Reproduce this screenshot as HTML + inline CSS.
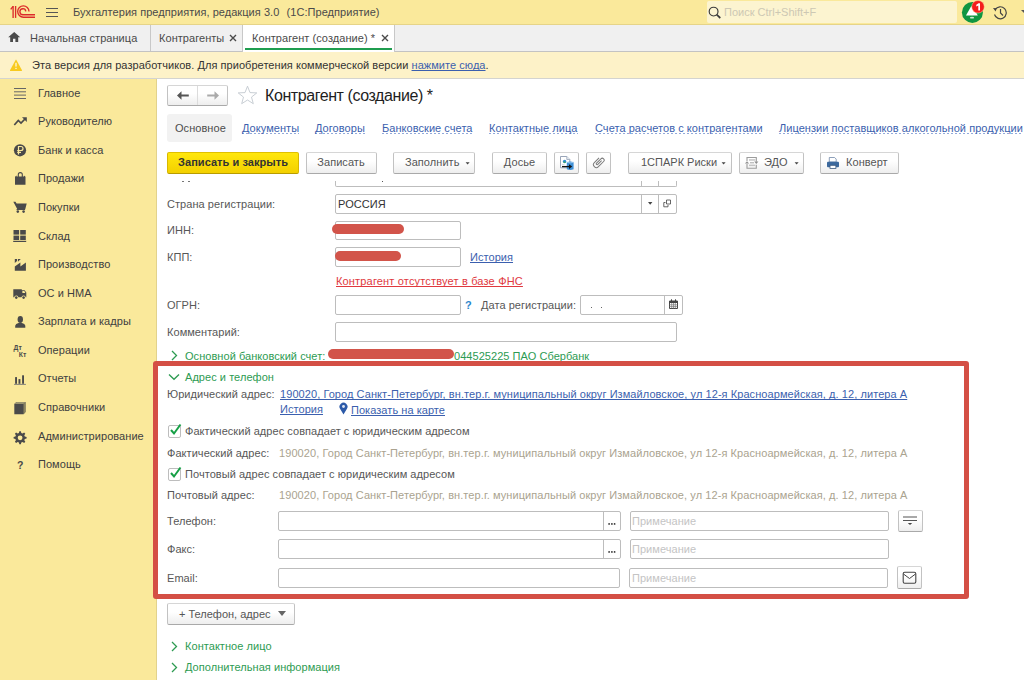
<!DOCTYPE html>
<html><head><meta charset="utf-8">
<style>
*{box-sizing:border-box}
html,body{margin:0;padding:0}
body{width:1024px;height:680px;overflow:hidden;position:relative;background:#fff;font-family:"Liberation Sans",sans-serif;font-size:11px;line-height:13px;color:#575757;letter-spacing:0.05px}
.a{position:absolute;white-space:nowrap}
.t{position:absolute;white-space:nowrap;line-height:13px}
.lnk{color:#3b5fae;text-decoration:underline;text-decoration-skip-ink:none}
*{text-decoration-skip-ink:none}
.dl{color:#3b5fae;height:12px;background:repeating-linear-gradient(90deg,#92a9da 0 2px,transparent 2px 4px) left bottom/100% 1px no-repeat}
.fld{position:absolute;border:1px solid #bdbdbd;border-radius:2px;background:#fff}
.btn{position:absolute;border:1px solid #c2c2c2;border-color:#d6d6d6 #c2c2c2 #a9a9a9;border-radius:2px;background:linear-gradient(#ffffff 40%,#eeeeee)}
.grn{color:#2d9b52}
.si{position:absolute;left:14px;width:13px;height:13px}
</style></head><body>

<!-- HEADER -->
<div class="a" style="left:0;top:0;width:1024px;height:24px;background:#fae99b"></div>
<div class="a" style="left:0;top:24px;width:1024px;height:1px;background:#e6d488"></div>
<svg class="a" style="left:10px;top:5px" width="26" height="14" viewBox="0 0 26 14">
 <g fill="none" stroke="#dc2a2a" stroke-width="1.35">
  <path d="M0.7 4.3 L3.1 1.3"/><path d="M3.1 1 V12.9"/><path d="M5.6 1 V12.9"/>
  <path d="M25 12.2 H13.35 A5.65 5.65 0 0 1 13.35 0.9 A5.65 5.65 0 0 1 19 6.4"/>
  <path d="M25 9.7 H12.9 A3 3 0 0 1 12.9 3.7 A3 3 0 0 1 15.8 6.4"/>
 </g>
</svg>
<div class="a" style="left:46px;top:8px;width:12px;height:1px;background:#555"></div>
<div class="a" style="left:46px;top:12px;width:12px;height:1px;background:#555"></div>
<div class="a" style="left:46px;top:16px;width:12px;height:1px;background:#555"></div>
<div class="t" style="left:73px;top:6px;color:#4a4a4a">Бухгалтерия предприятия, редакция 3.0&nbsp; <span style="margin-left:1px">(1С:Предприятие)</span></div>
<div class="a" style="left:707px;top:1px;width:250px;height:22px;background:#fcf4d0;border-radius:2px"></div>
<svg class="a" style="left:708px;top:6px" width="14" height="13" viewBox="0 0 14 13"><circle cx="5.6" cy="5.6" r="4.4" fill="none" stroke="#3a3a3a" stroke-width="1.15"/><path d="M8.7 8.7 L12.3 12" stroke="#3a3a3a" stroke-width="1.7"/></svg>
<div class="t" style="left:724px;top:6px;color:#cdc8b4;letter-spacing:0px">Поиск Ctrl+Shift+F</div>
<svg class="a" style="left:961px;top:0" width="26" height="24" viewBox="0 0 26 24">
 <circle cx="11.4" cy="12.4" r="10.5" fill="#0f9641"/>
 <path d="M9.9 6.8 Q10.9 5.6 11.9 6.8 L16.8 15.6 H5 Z" fill="#fff"/>
 <ellipse cx="11" cy="17.7" rx="2.1" ry="0.9" fill="#cfe9d2"/>
 <circle cx="17" cy="6.8" r="6.3" fill="#f41d1d" stroke="#f7d9a0" stroke-width="0.5"/>
 <path d="M15.3 4.7 L17.5 3.2 H19 V10.6 H17.3 V5.4 L15.3 6.4 Z" fill="#fff"/>
</svg>
<svg class="a" style="left:992px;top:5px" width="16" height="15" viewBox="0 0 16 15">
 <path d="M3.2 4.5 A6 6 0 1 1 2.5 9.5" fill="none" stroke="#444" stroke-width="1.2"/>
 <path d="M1 3 L4.8 3.2 L3.6 6.4 Z" fill="#444"/>
 <path d="M8.5 4 V8 L11 10.5" fill="none" stroke="#444" stroke-width="1.2"/>
</svg>
<svg class="a" style="left:1021px;top:10px" width="5" height="4"><path d="M0 0 H6 L3 3Z" fill="#555"/></svg>

<!-- TABS BAR -->
<div class="a" style="left:0;top:25px;width:1024px;height:27px;background:#f0f0f0;border-bottom:1px solid #c3c3c3"></div>
<svg class="a" style="left:8px;top:31px" width="13" height="12" viewBox="0 0 13 12"><path d="M6.2 0.9 L0.2 6.2 H2.2 V10.9 H5 V7.8 H7.4 V10.9 H10.2 V6.2 H12.2 Z" fill="#4a4a4a"/></svg>
<div class="t" style="left:30px;top:32px;color:#4a4a4a">Начальная страница</div>
<div class="a" style="left:150px;top:25px;width:1px;height:26px;background:#c8c8c8"></div>
<div class="t" style="left:159px;top:32px;color:#4a4a4a">Контрагенты</div>
<svg class="a" style="left:229px;top:34px" width="8" height="8" viewBox="0 0 8 8"><path d="M1 1 L7 7 M7 1 L1 7" stroke="#4a4a4a" stroke-width="1.4"/></svg>
<div class="a" style="left:242px;top:25px;width:153px;height:27px;background:#fff;border-left:1px solid #c8c8c8;border-right:1px solid #c8c8c8"></div>
<div class="a" style="left:245px;top:48px;width:147px;height:2px;background:#1f9d4f"></div>
<div class="t" style="left:252px;top:32px;color:#4a4a4a">Контрагент (создание) *</div>
<svg class="a" style="left:381px;top:34px" width="8" height="8" viewBox="0 0 8 8"><path d="M1 1 L7 7 M7 1 L1 7" stroke="#4a4a4a" stroke-width="1.4"/></svg>

<!-- WARNING BAR -->
<div class="a" style="left:0;top:52px;width:1024px;height:27px;background:#fdf2c8;border-bottom:1px solid #d4d4d0"></div>
<svg class="a" style="left:10px;top:59px" width="13" height="13" viewBox="0 0 13 13"><path d="M5.6 0.9 Q6 0.2 6.4 0.9 L12 11.3 Q12.2 12 11.5 12 H0.5 Q-0.2 12 0 11.3 Z" fill="#f8ca1e"/><rect x="5.2" y="3.8" width="1.6" height="3.8" fill="#fdeeb8"/><rect x="5.2" y="8.8" width="1.6" height="1.2" fill="#fdeeb8"/></svg>
<div class="t" style="left:32px;top:59px;color:#333">Эта версия для разработчиков. Для приобретения коммерческой версии <span class="lnk" style="color:#3b5fae">нажмите сюда</span>.</div>

<!-- SIDEBAR -->
<div class="a" style="left:0;top:79px;width:157px;height:601px;background:#fae99b;border-right:1px solid #e2d28c"></div>
<div class="t" style="left:38px;top:87px;color:#404040">Главное</div>
<div class="t" style="left:38px;top:115px;color:#404040">Руководителю</div>
<div class="t" style="left:38px;top:144px;color:#404040">Банк и касса</div>
<div class="t" style="left:38px;top:172px;color:#404040">Продажи</div>
<div class="t" style="left:38px;top:201px;color:#404040">Покупки</div>
<div class="t" style="left:38px;top:230px;color:#404040">Склад</div>
<div class="t" style="left:38px;top:258px;color:#404040">Производство</div>
<div class="t" style="left:38px;top:287px;color:#404040">ОС и НМА</div>
<div class="t" style="left:38px;top:315px;color:#404040">Зарплата и кадры</div>
<div class="t" style="left:38px;top:344px;color:#404040">Операции</div>
<div class="t" style="left:38px;top:372px;color:#404040">Отчеты</div>
<div class="t" style="left:38px;top:401px;color:#404040">Справочники</div>
<div class="t" style="left:38px;top:430px;color:#404040">Администрирование</div>
<div class="t" style="left:38px;top:458px;color:#404040">Помощь</div>
<svg class="a" style="left:0;top:0" width="40" height="480" viewBox="0 0 40 480">
 <g fill="#4a4a4a">
  <rect x="14" y="88" width="12" height="1" fill="#666"/>
  <rect x="14" y="91.3" width="12" height="1" fill="#666"/>
  <rect x="14" y="94.6" width="12" height="1" fill="#666"/>
  <rect x="14" y="98" width="12" height="1" fill="#666"/>
  <path d="M14.3 125 L18.3 120.5 L21 123 L25 119" fill="none" stroke="#4a4a4a" stroke-width="1.7"/>
  <path d="M22 117.3 H26.8 V122 Z" />
  <circle cx="20" cy="150.3" r="6.1"/>
  <path d="M18.5 154.5 V146.5 H21 A2 2 0 0 1 21 150.5 H17.2 M17.2 152.3 H21" fill="none" stroke="#fae99b" stroke-width="1.2"/>
  <path d="M15 176.8 L16.6 175.4 V176.4 H23.9 V175.4 L25.5 176.8 V184.8 H15 Z"/>
  <path d="M18.3 178 V174.6 A2 2 0 0 1 22.3 174.6 V178" fill="none" stroke="#4a4a4a" stroke-width="1.1"/>
  <path d="M13.3 201.8 H15.5 L16.6 203.5 H26.7 L25.3 209 H17.2 Z"/>
  <circle cx="17.8" cy="211.6" r="1.3"/><circle cx="23.6" cy="211.6" r="1.3"/>
  <rect x="16.6" y="209" width="8.5" height="1"/>
  <rect x="13.5" y="230" width="5.6" height="4.6"/><rect x="20.2" y="230" width="5.6" height="4.6"/>
  <rect x="13.5" y="235.6" width="5.6" height="4.4"/><rect x="20.2" y="235.6" width="5.6" height="4.4"/>
  <rect x="13.2" y="240.8" width="13" height="1.2"/>
  <path d="M14.8 270.8 V266.6 L20.4 262.6 V266.4 L25.9 262.4 V270.8 Z"/><path d="M14.8 259 H17 V261 L14.8 263 Z M17.9 259 H20.8 L17.9 261.8 Z"/>
  <path d="M13.3 289.2 H21.8 V290.2 H24.6 L26.3 292.6 V297.2 H13.3 Z"/>
  <path d="M22.4 291 H24.3 L25.4 293 H22.4 Z" fill="#fae99b"/>
  <circle cx="16.3" cy="297.6" r="2.1" fill="#fae99b"/><circle cx="16.3" cy="297.6" r="1.3"/>
  <circle cx="23.6" cy="297.6" r="2.1" fill="#fae99b"/><circle cx="23.6" cy="297.6" r="1.3"/>
  <ellipse cx="20.3" cy="319.5" rx="2.7" ry="3.4"/>
  <path d="M15.2 327.8 V325.8 Q15.5 323.5 18.5 323 H22 Q25 323.5 25.3 325.8 V327.8 Z"/>
  <text x="13.6" y="349.6" font-family="Liberation Sans" font-size="6.8" font-weight="bold" letter-spacing="0">Дт</text>
  <text x="18.8" y="357.2" font-family="Liberation Sans" font-size="6.8" font-weight="bold" letter-spacing="0">Кт</text>
  <rect x="15.1" y="377.1" width="1.9" height="6.7"/><rect x="18.5" y="379.1" width="1.9" height="4.7"/><rect x="22.1" y="375.3" width="1.9" height="8.5"/>
  <rect x="14.1" y="383.9" width="11.8" height="0.9" fill="#777"/>
  <path d="M14.3 404 L16.5 402 H25.5 V412 L23.5 414.3 H14.3 Z" fill="#4a4a4a"/>
  <path d="M23.5 404 L25.5 402 V412 L23.5 414.3 Z" fill="#8a8460"/>
  <path d="M14.3 404 L16.5 402 H25.5 L23.5 404 Z" fill="#9a9470"/>
  <path fill-rule="evenodd" d="M19.3 431.3 H20.9 L21.3 433.1 L22.6 433.6 L24.1 432.6 L25.3 433.8 L24.3 435.3 L24.8 436.6 L26.6 437 V438.6 L24.8 439 L24.3 440.3 L25.3 441.8 L24.1 443 L22.6 442 L21.3 442.5 L20.9 444.3 H19.3 L18.9 442.5 L17.6 442 L16.1 443 L14.9 441.8 L15.9 440.3 L15.4 439 L13.6 438.6 V437 L15.4 436.6 L15.9 435.3 L14.9 433.8 L16.1 432.6 L17.6 433.6 L18.9 433.1 Z M20.1 435.4 A2.4 2.4 0 1 0 20.1 440.2 A2.4 2.4 0 1 0 20.1 435.4 Z"/>
  <text x="17" y="469" font-family="Liberation Sans" font-size="10.5" font-weight="bold">?</text>
 </g>
</svg>

<!-- CONTENT placeholder -->
<!-- FORM HEADER -->
<div class="btn" style="left:167px;top:85px;width:61px;height:21px"></div>
<div class="a" style="left:197px;top:86px;width:1px;height:19px;background:#dcdcdc"></div>
<svg class="a" style="left:176px;top:90px" width="14" height="11" viewBox="0 0 14 11"><path d="M1 5.5 L5.5 1.2 V4.5 H12.8 V6.5 H5.5 V9.8 Z" fill="#555"/></svg>
<svg class="a" style="left:206px;top:90px" width="14" height="11" viewBox="0 0 14 11"><path d="M13 5.5 L8.5 1.2 V4.5 H1.2 V6.5 H8.5 V9.8 Z" fill="#aaa"/></svg>
<svg class="a" style="left:237px;top:85px" width="21" height="20" viewBox="0 0 21 20"><path d="M10.5 1.2 L13 7.6 L19.8 7.9 L14.5 12.1 L16.3 18.7 L10.5 15 L4.7 18.7 L6.5 12.1 L1.2 7.9 L8 7.6 Z" fill="none" stroke="#c2c8cf" stroke-width="0.9"/></svg>
<div class="t" style="left:265px;top:87px;font-size:16px;line-height:18px;letter-spacing:-0.42px;color:#1e1e1e">Контрагент (создание) *</div>

<div class="a" style="left:167px;top:114px;width:65px;height:28px;background:#f2f2f2;border-radius:3px"></div>
<div class="t" style="left:175px;top:122px;color:#4d4d4d">Основное</div>
<div class="t dl" style="left:242px;top:122px">Документы</div>
<div class="t dl" style="left:315px;top:122px">Договоры</div>
<div class="t dl" style="left:382px;top:122px">Банковские счета</div>
<div class="t dl" style="left:489px;top:122px">Контактные лица</div>
<div class="t dl" style="left:595px;top:122px">Счета расчетов с контрагентами</div>
<div class="t dl" style="left:779px;top:122px">Лицензии поставщиков алкогольной продукции</div>

<!-- TOOLBAR -->
<div class="btn" style="left:167px;top:152px;width:132px;height:22px;background:linear-gradient(#ffe70c,#f3d000);border-color:#e0c000 #d8b800 #b89c00"></div>
<div class="t" style="left:167px;top:156px;width:132px;text-align:center;font-weight:bold;color:#333">Записать и закрыть</div>
<div class="btn" style="left:306px;top:152px;width:71px;height:22px"></div>
<div class="t" style="left:306px;top:156px;width:70px;text-align:center;color:#555">Записать</div>
<div class="btn" style="left:393px;top:152px;width:82px;height:22px"></div>
<div class="t" style="left:405px;top:156px;color:#555">Заполнить</div>
<svg class="a" style="left:465px;top:162px" width="5" height="3"><path d="M0.6 0.2H4.6L2.6 2.4Z" fill="#444"/></svg>
<div class="btn" style="left:492px;top:152px;width:55px;height:22px"></div>
<div class="t" style="left:492px;top:156px;width:55px;text-align:center;color:#555">Досье</div>
<div class="btn" style="left:554px;top:152px;width:25px;height:22px"></div>
<svg class="a" style="left:558px;top:154px" width="18" height="18" viewBox="0 0 18 18">
 <path d="M2.5 2.5 H8.8 L11.8 5.5 V13.8 H2.5 Z" fill="#fff" stroke="#8d9bb0" stroke-width="0.9"/>
 <path d="M8.8 2.5 V5.5 H11.8" fill="#e8edf3" stroke="#8d9bb0" stroke-width="0.7"/>
 <circle cx="6.6" cy="7.5" r="1.7" fill="#2b8ad6"/><path d="M5.4 7.8 Q6.5 6.8 7.8 8.2 Q6.8 9.4 5.6 8.5Z" fill="#3fae49"/>
 <path d="M3.8 10.6 H6.5" stroke="#c9cfd8" stroke-width="0.8"/>
 <path d="M8.8 8.2 Q12.2 6.8 15.6 8.2 V15.2 Q12.2 16.6 8.8 15.2 Z" fill="#3e8fd6"/>
 <path d="M8.8 8.2 Q12.2 9.6 15.6 8.2" fill="none" stroke="#a9d2f2" stroke-width="0.8"/>
 <path d="M4 12.6 H12" stroke="#111" stroke-width="1.3"/>
 <path d="M11 10.3 L14.2 12.6 L11 14.9 Z" fill="#111"/>
</svg>
<div class="btn" style="left:586px;top:152px;width:25px;height:22px"></div>
<svg class="a" style="left:592px;top:155px" width="14" height="14" viewBox="-7 -7 14 14">
 <g transform="rotate(225)"><path d="M-0.9 2.8 V-2.6 A0.9 0.9 0 0 1 0.9 -2.6 V3.6 A1.9 1.9 0 0 1 -2.9 3.6 V-3.7 A2.9 2.9 0 0 1 2.9 -3.7 V3" fill="none" stroke="#7a7a7a" stroke-width="1"/></g>
</svg>
<div class="btn" style="left:628px;top:152px;width:104px;height:22px"></div>
<div class="t" style="left:641px;top:156px;color:#555;letter-spacing:0">1СПАРК Риски</div>
<svg class="a" style="left:721px;top:162px" width="5" height="3"><path d="M0.6 0.2H4.6L2.6 2.4Z" fill="#444"/></svg>
<div class="btn" style="left:739px;top:152px;width:65px;height:22px"></div>
<svg class="a" style="left:744px;top:155px" width="16" height="16" viewBox="0 0 16 16">
 <path d="M3 6 V2.5 H12.3 V6.8" fill="none" stroke="#9c9c9c" stroke-width="1.1"/>
 <path d="M10.2 6.6 H14.4 L12.3 9 Z" fill="#8f8f8f"/>
 <path d="M12.3 9.8 V13.3 H3 V9" fill="none" stroke="#9c9c9c" stroke-width="1.1"/>
 <path d="M0.9 8.6 H5.1 L3 6.2 Z" fill="#8f8f8f"/>
 <rect x="5" y="4.2" width="6.3" height="1.5" fill="#c4c4c4"/>
 <rect x="6" y="7.3" width="4" height="1" fill="#a5a5a5"/>
 <rect x="5" y="9.6" width="6.3" height="1.5" fill="#c4c4c4"/>
</svg>
<div class="t" style="left:764px;top:156px;color:#555">ЭДО</div>
<svg class="a" style="left:794px;top:162px" width="5" height="3"><path d="M0.6 0.2H4.6L2.6 2.4Z" fill="#444"/></svg>
<div class="btn" style="left:820px;top:152px;width:79px;height:22px"></div>
<svg class="a" style="left:826px;top:156px" width="14" height="14" viewBox="0 0 14 14">
 <path d="M3.3 1.5 H8.6 L10.2 3.1 V6 H3.3 Z" fill="#fff" stroke="#7088a8" stroke-width="0.8"/>
 <rect x="1" y="5.7" width="12" height="5.5" rx="1" fill="#3d6a9e"/>
 <rect x="4" y="9.3" width="5.9" height="3.1" fill="#fff" stroke="#3d5a80" stroke-width="0.8"/>
</svg>
<div class="t" style="left:846px;top:156px;color:#555">Конверт</div>

<!-- FORM BODY -->
<div class="a" style="left:335px;top:181px;width:342px;height:6px;border:1px solid #bdbdbd;border-top:none;border-radius:0 0 2px 2px"></div>
<div class="a" style="left:641px;top:181px;width:1px;height:5px;background:#bdbdbd"></div>
<div class="a" style="left:658px;top:181px;width:1px;height:5px;background:#bdbdbd"></div>
<div class="a" style="left:382px;top:181px;width:1px;height:1px;background:#555"></div>
<div class="a" style="left:182px;top:181px;width:2px;height:1px;background:#777"></div>
<div class="a" style="left:188px;top:181px;width:2px;height:1px;background:#777"></div>

<div class="t" style="left:167px;top:198px">Страна регистрации:</div>
<div class="fld" style="left:335px;top:194px;width:342px;height:20px"></div>
<div class="a" style="left:641px;top:195px;width:1px;height:18px;background:#bdbdbd"></div>
<div class="a" style="left:658px;top:195px;width:1px;height:18px;background:#bdbdbd"></div>
<svg class="a" style="left:648px;top:202px" width="5" height="3"><path d="M0 0H4.4L2.2 2.8Z" fill="#444"/></svg>
<svg class="a" style="left:663px;top:199px" width="9" height="9" viewBox="0 0 9 9"><path d="M3.5 1 H7.5 V5 H3.5Z M2.5 3.5 H0.8 V7.8 H5 V6" fill="none" stroke="#555" stroke-width="0.9"/></svg>
<div class="t" style="left:338px;top:198px;color:#333">РОССИЯ</div>

<div class="t" style="left:167px;top:224px">ИНН:</div>
<div class="fld" style="left:335px;top:221px;width:126px;height:19px"></div>
<div class="a" style="left:332px;top:224px;width:72px;height:10px;background:#d2544a;border-radius:5px"></div>

<div class="t" style="left:167px;top:251px">КПП:</div>
<div class="fld" style="left:335px;top:247px;width:126px;height:20px"></div>
<div class="a" style="left:335px;top:251px;width:66px;height:10px;background:#d2544a;border-radius:5px"></div>
<div class="t lnk" style="left:470px;top:251px">История</div>

<div class="t" style="left:336px;top:275px;color:#e0393e;text-decoration:underline;letter-spacing:0.17px">Контрагент отсутствует в базе ФНС</div>

<div class="t" style="left:167px;top:299px">ОГРН:</div>
<div class="fld" style="left:335px;top:295px;width:126px;height:20px"></div>
<div class="t" style="left:465px;top:299px;color:#2b87cc;font-weight:bold">?</div>
<div class="t" style="left:481px;top:299px">Дата регистрации:</div>
<div class="fld" style="left:580px;top:295px;width:103px;height:20px"></div>
<div class="a" style="left:664px;top:296px;width:1px;height:18px;background:#bdbdbd"></div>
<div class="a" style="left:591px;top:307px;width:1px;height:1px;background:#666"></div>
<div class="a" style="left:601px;top:307px;width:1px;height:1px;background:#666"></div>
<svg class="a" style="left:669px;top:299px" width="9" height="10" viewBox="0 0 9 10"><path d="M0.5 2 H8.5 V9.5 H0.5Z" fill="#fff" stroke="#444" stroke-width="1"/><rect x="0.5" y="2" width="8" height="2" fill="#444"/><path d="M2.5 0.3V2.5M6.5 0.3V2.5" stroke="#444" stroke-width="1"/><path d="M0.5 5.8H8.5M0.5 7.6H8.5M2.7 4V9.5M4.5 4V9.5M6.3 4V9.5" stroke="#777" stroke-width="0.7"/></svg>

<div class="t" style="left:167px;top:326px">Комментарий:</div>
<div class="fld" style="left:335px;top:322px;width:342px;height:20px"></div>

<svg class="a" style="left:171px;top:350px" width="7" height="11" viewBox="0 0 7 11"><path d="M1 1 L5.5 5.5 L1 10" fill="none" stroke="#2d9b52" stroke-width="1.3"/></svg>
<div class="t grn" style="left:185px;top:350px">Основной банковский счет:</div>
<div class="a" style="left:328px;top:349px;width:126px;height:10px;background:#d2544a;border-radius:5px"></div>
<div class="t grn" style="left:454px;top:350px">044525225 ПАО Сбербанк</div>

<!-- ADDRESS GROUP -->
<svg class="a" style="left:168px;top:373px" width="12" height="8" viewBox="0 0 12 8"><path d="M1 1.5 L6 6.3 L11 1.5" fill="none" stroke="#2d9b52" stroke-width="1.3"/></svg>
<div class="t grn" style="left:185px;top:371px">Адрес и телефон</div>
<div class="t" style="left:167px;top:388px">Юридический адрес:</div>
<div class="t lnk" style="left:280px;top:388px;letter-spacing:0.07px">190020, Город Санкт-Петербург, вн.тер.г. муниципальный округ Измайловское, ул 12-я Красноармейская, д. 12, литера А</div>
<div class="t lnk" style="left:280px;top:403px">История</div>
<svg class="a" style="left:339px;top:402px" width="9" height="13" viewBox="0 0 9 13"><path d="M4.5 12.5 L1.2 7 A4 4 0 1 1 7.8 7 Z" fill="#2c5aa8"/><circle cx="4.5" cy="4.5" r="1.4" fill="#dfe6f3"/></svg>
<div class="t lnk" style="left:351px;top:404px">Показать на карте</div>

<div class="a" style="left:168px;top:425px;width:13px;height:13px;border:1px solid #bdbdbd;border-radius:2px;background:#fff"></div>
<svg class="a" style="left:169px;top:423px" width="13" height="13" viewBox="0 0 13 13"><path d="M2 7 L5 10.5 L11.5 1.5" fill="none" stroke="#16a046" stroke-width="2"/></svg>
<div class="t" style="left:185px;top:425px">Фактический адрес совпадает с юридическим адресом</div>
<div class="t" style="left:167px;top:447px">Фактический адрес:</div>
<div class="t" style="left:279px;top:447px;color:#aaa38f;letter-spacing:0.08px">190020, Город Санкт-Петербург, вн.тер.г. муниципальный округ Измайловское, ул 12-я Красноармейская, д. 12, литера А</div>

<div class="a" style="left:168px;top:468px;width:13px;height:13px;border:1px solid #bdbdbd;border-radius:2px;background:#fff"></div>
<svg class="a" style="left:169px;top:466px" width="13" height="13" viewBox="0 0 13 13"><path d="M2 7 L5 10.5 L11.5 1.5" fill="none" stroke="#16a046" stroke-width="2"/></svg>
<div class="t" style="left:185px;top:468px">Почтовый адрес совпадает с юридическим адресом</div>
<div class="t" style="left:167px;top:489px">Почтовый адрес:</div>
<div class="t" style="left:279px;top:489px;color:#aaa38f;letter-spacing:0.08px">190020, Город Санкт-Петербург, вн.тер.г. муниципальный округ Измайловское, ул 12-я Красноармейская, д. 12, литера А</div>

<div class="t" style="left:167px;top:515px">Телефон:</div>
<div class="fld" style="left:278px;top:511px;width:343px;height:20px"></div>
<div class="a" style="left:603px;top:512px;width:1px;height:18px;background:#bdbdbd"></div>
<svg class="a" style="left:606px;top:521px" width="12" height="5"><circle cx="3.1" cy="2.9" r="0.9" fill="#333"/><circle cx="5.9" cy="2.9" r="0.9" fill="#333"/><circle cx="8.6" cy="2.9" r="0.9" fill="#333"/></svg>
<div class="fld" style="left:630px;top:511px;width:259px;height:20px"></div>
<div class="t" style="left:632px;top:515px;color:#c4c4c4">Примечание</div>
<div class="btn" style="left:898px;top:510px;width:25px;height:22px"></div>
<svg class="a" style="left:902px;top:515px" width="16" height="12" viewBox="0 0 16 12"><path d="M1 2H15M1 5.5H15" stroke="#555" stroke-width="1.1"/><path d="M5.8 8H10.2L8 10Z" fill="#444"/></svg>

<div class="t" style="left:167px;top:543px">Факс:</div>
<div class="fld" style="left:278px;top:539px;width:343px;height:20px"></div>
<div class="a" style="left:603px;top:540px;width:1px;height:18px;background:#bdbdbd"></div>
<svg class="a" style="left:606px;top:549px" width="12" height="5"><circle cx="3.1" cy="2.9" r="0.9" fill="#333"/><circle cx="5.9" cy="2.9" r="0.9" fill="#333"/><circle cx="8.6" cy="2.9" r="0.9" fill="#333"/></svg>
<div class="fld" style="left:630px;top:539px;width:259px;height:20px"></div>
<div class="t" style="left:632px;top:543px;color:#c4c4c4">Примечание</div>

<div class="t" style="left:167px;top:572px">Email:</div>
<div class="fld" style="left:278px;top:568px;width:342px;height:20px"></div>
<div class="fld" style="left:629px;top:568px;width:259px;height:20px"></div>
<div class="t" style="left:632px;top:572px;color:#c4c4c4">Примечание</div>
<div class="btn" style="left:897px;top:566px;width:25px;height:23px"></div>
<svg class="a" style="left:902px;top:571px" width="15" height="13" viewBox="0 0 15 13"><rect x="1.2" y="1.2" width="12.6" height="11" rx="1.5" fill="none" stroke="#444" stroke-width="1.1"/><path d="M1.5 3 L7.5 7.5 L13.5 3" fill="none" stroke="#444" stroke-width="1"/></svg>

<!-- RED HIGHLIGHT -->
<div class="a" style="left:153px;top:361px;width:816px;height:238px;border:5px solid #d44f45;border-radius:3px"></div>

<div class="btn" style="left:167px;top:603px;width:128px;height:22px"></div>
<div class="t" style="left:179px;top:608px;color:#555;letter-spacing:0">+ Телефон, адрес</div>
<svg class="a" style="left:278px;top:611px" width="8" height="5"><path d="M0 0H8L4 5Z" fill="#666"/></svg>

<svg class="a" style="left:171px;top:641px" width="7" height="11" viewBox="0 0 7 11"><path d="M1 1 L5.5 5.5 L1 10" fill="none" stroke="#2d9b52" stroke-width="1.3"/></svg>
<div class="t grn" style="left:185px;top:640px">Контактное лицо</div>
<svg class="a" style="left:171px;top:662px" width="7" height="11" viewBox="0 0 7 11"><path d="M1 1 L5.5 5.5 L1 10" fill="none" stroke="#2d9b52" stroke-width="1.3"/></svg>
<div class="t grn" style="left:185px;top:661px">Дополнительная информация</div>


</body></html>
